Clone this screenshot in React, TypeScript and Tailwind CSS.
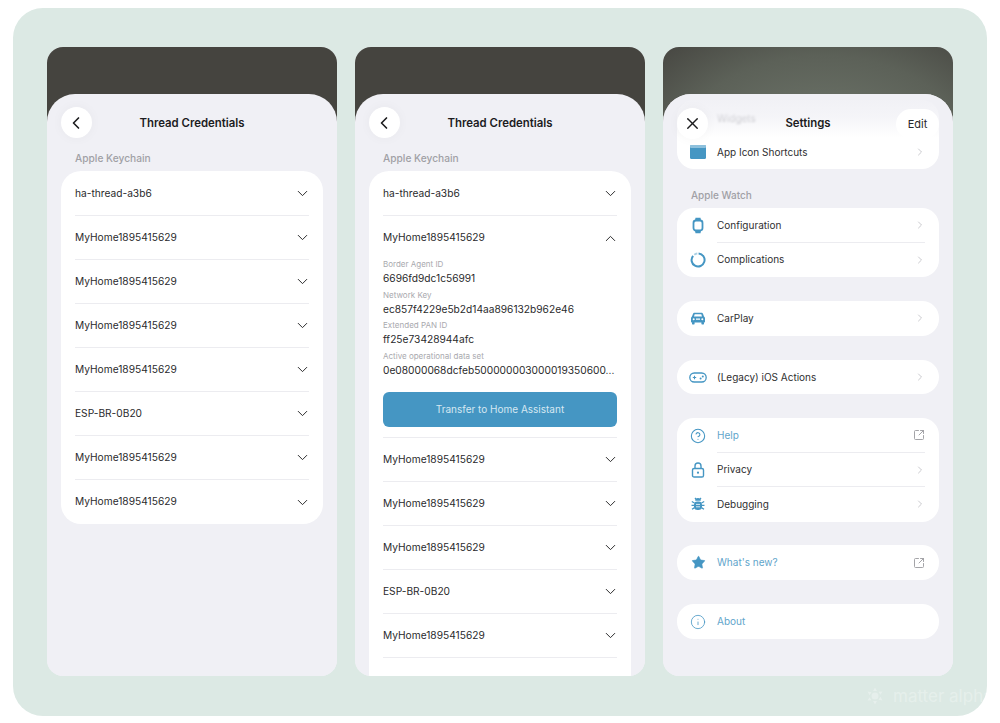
import { ReactNode } from 'react';
import { ChevronDown, ChevronLeft, ChevronRight, ChevronUp, CircleHelp, Info, Star, SquareArrowOutUpRight, X } from 'lucide-react';

const names = ['ha-thread-a3b6', 'MyHome1895415629', 'MyHome1895415629', 'MyHome1895415629', 'MyHome1895415629', 'ESP-BR-0B20', 'MyHome1895415629', 'MyHome1895415629'];

function Phone({ children, dim = false }: { children: ReactNode; dim?: boolean }) {
  return (
    <div className="relative w-[290px] h-[629px] rounded-[16px] overflow-hidden pt-[47px] bg-[#f0f0f5]">
      <div className={`absolute left-0 right-0 top-0 h-[120px] ${dim ? 'bg-[radial-gradient(ellipse_at_55%_90%,#727a6f,#5c6158_65%,#474742)]' : 'bg-[#45443f]'}`} />
      <div className="relative h-[582px] rounded-t-[28px] bg-[#f0f0f5] overflow-hidden">{children}</div>
    </div>
  );
}

function RoundButton({ children }: { children: ReactNode }) {
  return (
    <div className="w-[31px] h-[31px] shrink-0 rounded-full bg-white flex items-center justify-center text-[#1c1c1e] shadow-[0_0_12px_rgba(0,0,0,0.04)]">
      {children}
    </div>
  );
}

function ThreadHeader() {
  return (
    <>
      <div className="flex items-center px-[14px] pt-[13px] h-[44px]">
        <RoundButton>
          <ChevronLeft size={20} strokeWidth={2} className="-ml-[1px]" />
        </RoundButton>
        <div className="flex-1 pr-[31px] pt-[2px] text-center text-[11.4px] font-semibold text-[#1c1c1e]">Thread Credentials</div>
      </div>
      <div className="px-[28px] mt-[14px] h-[19px] text-[10.2px] leading-[13px] font-medium text-[#a0a0a5]">Apple Keychain</div>
    </>
  );
}

function CredRow({ name, open = false, line = true }: { name: string; open?: boolean; line?: boolean }) {
  return (
    <div className={`h-[44px] flex items-center justify-between ${line && !open ? 'border-b border-[#ececf0]' : ''}`}>
      <span className="text-[10.2px] text-[#2a2a2c]">{name}</span>
      {open ? <ChevronUp size={17} strokeWidth={1.4} className="text-[#2a2a2c] -mr-[2px]" /> : <ChevronDown size={17} strokeWidth={1.4} className="text-[#2a2a2c] -mr-[2px]" />}
    </div>
  );
}

function Field({ label, value }: { label: string; value: string }) {
  return (
    <div className="h-[30.6px]">
      <div className="text-[8px] leading-[12px] text-[#a9a9ae]">{label}</div>
      <div className="text-[10.2px] leading-[17px] text-[#2a2a2c] whitespace-nowrap">{value}</div>
    </div>
  );
}

function SettingRow({ icon, label, link = false, external = false, line = false, noArrow = false }: { icon: ReactNode; label: string; link?: boolean; external?: boolean; line?: boolean; noArrow?: boolean }) {
  return (
    <div className="h-[34.4px] flex items-center pl-[13px] pr-[14px]">
      <div className="w-[16px] h-[16px] flex items-center justify-center text-[#4596c3] shrink-0">{icon}</div>
      <div className={`ml-[11px] flex-1 h-full flex items-center justify-between ${line ? 'border-b border-[#ececf0]' : ''}`}>
        <span className={`text-[10px] ${link ? 'text-[#5fa5cb]' : 'text-[#2f2f31]'}`}>{label}</span>
        {noArrow ? null : external ? (
          <SquareArrowOutUpRight size={12} strokeWidth={1.8} className="text-[#9a9a9e]" />
        ) : (
          <ChevronRight size={12} strokeWidth={1.6} className="text-[#bdbdc2] -mr-[1px]" />
        )}
      </div>
    </div>
  );
}

function Group({ children, className = '' }: { children: ReactNode; className?: string }) {
  return <div className={`mx-[14px] bg-white rounded-[17px] overflow-hidden ${className}`}>{children}</div>;
}

function WatchIcon() {
  return (
    <svg width="12" height="17" viewBox="0 0 12 17" fill="none">
      <rect x="1.5" y="3.5" width="9" height="10" rx="2.4" stroke="currentColor" strokeWidth="1.8" />
      <path d="M3 3.2 3.500 .8h5L9 3.200zM3 13.800l.5 2.400h5l.5-2.400z" fill="currentColor" />
    </svg>
  );
}

function RingIcon() {
  return (
    <svg width="16" height="16" viewBox="0 0 16 16" fill="none">
      <path d="M8.600 1.500a6.500 6.500 0 1 1-5.500 2.300" stroke="currentColor" strokeWidth="2" />
      <path d="M4.300 2.700a6.500 6.500 0 0 1 3-1.200" stroke="currentColor" strokeWidth="2" opacity="0.45" />
    </svg>
  );
}

function CarIcon() {
  return (
    <svg width="14" height="13" viewBox="0 0 14 13" fill="currentColor">
      <path fillRule="evenodd" d="M3.600.8h6.800c.8 0 1.400.5 1.700 1.200l.9 2.600c.6.4 1 1 1 1.700v3.400c0 .4-.3.7-.7.7H.7C.3 10.400 0 10.100 0 9.700V6.300c0-.7.4-1.300 1-1.700L1.900 2C2.200 1.300 2.800.8 3.600.8zM3.700 2.200 3 4.400h8l-.700-2.200zM2.700 6.200a1 1 0 1 0 0 2 1 1 0 0 0 0-2zm8.600 0a1 1 0 1 0 0 2 1 1 0 0 0 0-2zM5 6.500v1.200h4V6.500z" />
      <rect x="1" y="10" width="2.600" height="2.400" rx=".6" />
      <rect x="10.400" y="10" width="2.600" height="2.400" rx=".6" />
    </svg>
  );
}

function GamepadIcon() {
  return (
    <svg width="18" height="11" viewBox="0 0 18 11" fill="none" className="shrink-0">
      <rect x="0.8" y="1" width="16.400" height="9" rx="4.500" stroke="currentColor" strokeWidth="1.300" />
      <path d="M3.800 5.500h3.400M5.500 3.800v3.400" stroke="currentColor" strokeWidth="1.100" />
      <circle cx="11.600" cy="6.400" r="1" fill="currentColor" />
      <circle cx="13.800" cy="4.600" r="1" fill="currentColor" />
    </svg>
  );
}

function BugIcon() {
  return (
    <svg width="14" height="14" viewBox="0 0 14 14" fill="currentColor">
      <path d="M4.200 3.800a2.800 2.800 0 0 1 5.600 0z" />
      <rect x="3" y="4.400" width="8" height="8.600" rx="3.400" />
      <path d="M4 1 5.200 2.400M10 1 8.800 2.400M0.800 4.500 3.500 6M13.200 4.500 10.500 6M0.500 8.400h3M13.500 8.400h-3M1 12.200 3.600 10.600M13 12.200 10.400 10.600" stroke="currentColor" strokeWidth="1.300" />
      <path d="M5 7.400h4M5 9.800h4" stroke="#ffffff" strokeWidth=".8" />
    </svg>
  );
}

function LockIcon() {
  return (
    <svg width="14" height="16" viewBox="0 0 14 16" fill="none">
      <path d="M4 6.500V4a3 3 0 0 1 6 0v2.500" stroke="currentColor" strokeWidth="1.400" />
      <rect x="1.500" y="6.500" width="11" height="8.500" rx="1.600" stroke="currentColor" strokeWidth="1.400" />
      <circle cx="7" cy="10.700" r="1.100" fill="currentColor" />
    </svg>
  );
}

function Watermark() {
  return (
    <div className="absolute left-[852px] top-[678px] w-[122px] overflow-hidden flex items-center gap-[8px] text-white/30 whitespace-nowrap">
      <svg width="20" height="20" viewBox="0 0 20 20" fill="currentColor" className="shrink-0">
        <circle cx="10" cy="10" r="3.500" />
        <path d="M10 1.500 12 5H8zM10 18.500 8 15h4zM2.500 5.500l4 .8-2 3zM17.500 14.500l-4-.8 2-3zM2.500 14.500l2-3.300 2 3zM17.500 5.500l-2 3.300-2-3z" />
      </svg>
      <span className="text-[17px] leading-[20px]">matter alpha</span>
    </div>
  );
}

export default function App() {
  return (
    <div className="w-[1000px] h-[723px] bg-white pt-[8px] pl-[13px] overflow-hidden [font-family:Inter,'Liberation_Sans',sans-serif]">
      <div className="relative w-[974px] h-[708px] rounded-[30px] overflow-hidden bg-[#dce9e4] pt-[39px] pl-[34px] flex gap-[18px]">
        <Phone>
          <ThreadHeader />
          <div className="mx-[14px] bg-white rounded-[20px] px-[14px] pt-[1px]">
            {names.map((name, i) => (
              <CredRow key={i} name={name} line={i < names.length - 1} />
            ))}
          </div>
        </Phone>

        <Phone>
          <ThreadHeader />
          <div className="mx-[14px] bg-white rounded-t-[20px] px-[14px] pt-[1px] h-[520px] overflow-hidden">
            <CredRow name="ha-thread-a3b6" />
            <CredRow name="MyHome1895415629" open />
            <div className="mt-[-2px]">
              <Field label="Border Agent ID" value="6696fd9dc1c56991" />
              <Field label="Network Key" value="ec857f4229e5b2d14aa896132b962e46" />
              <Field label="Extended PAN ID" value="ff25e73428944afc" />
              <Field label="Active operational data set" value="0e08000068dcfeb500000003000019350600..." />
            </div>
            <div className="mt-[12px] h-[34.500px] rounded-[6px] bg-[#4596c3] flex items-center justify-center text-[10px] text-[#d5e8f2]">
              Transfer to Home Assistant
            </div>
            <div className="mt-[10.500px] border-t border-[#ececf0]" />
            <CredRow name="MyHome1895415629" />
            <CredRow name="MyHome1895415629" />
            <CredRow name="MyHome1895415629" />
            <CredRow name="ESP-BR-0B20" />
            <CredRow name="MyHome1895415629" />
          </div>
        </Phone>

        <Phone dim>
          <div className="pt-[6px]">
            <Group>
              <div className="h-[35px] pl-[40px] pt-[11px] text-[10px] text-[#9b9ba0] blur-[1px]">Widgets</div>
              <SettingRow
                label="App Icon Shortcuts"
                icon={
                  <svg width="16" height="14" viewBox="0 0 16 14">
                    <rect width="16" height="14" rx="1.500" fill="#4596c3" />
                    <rect width="16" height="3" rx="1" fill="#8dc0dc" />
                  </svg>
                }
              />
            </Group>
            <div className="px-[28px] mt-[20px] h-[19px] text-[10px] leading-[13px] font-medium text-[#a0a0a5]">Apple Watch</div>
            <Group>
              <SettingRow icon={<WatchIcon />} label="Configuration" line />
              <SettingRow icon={<RingIcon />} label="Complications" />
            </Group>
            <Group className="mt-[24px]">
              <SettingRow icon={<CarIcon />} label="CarPlay" />
            </Group>
            <Group className="mt-[24.500px]">
              <SettingRow icon={<GamepadIcon />} label="(Legacy) iOS Actions" />
            </Group>
            <Group className="mt-[24px]">
              <SettingRow icon={<CircleHelp size={16} strokeWidth={1.600} />} label="Help" link external line />
              <SettingRow icon={<LockIcon />} label="Privacy" line />
              <SettingRow icon={<BugIcon />} label="Debugging" />
            </Group>
            <Group className="mt-[23.500px] pt-[0.500px]">
              <SettingRow icon={<Star size={15} fill="currentColor" strokeWidth={1} />} label="What's new?" link external />
            </Group>
            <Group className="mt-[24px] pt-[0.500px]">
              <SettingRow icon={<Info size={16} strokeWidth={1.200} />} label="About" link noArrow />
            </Group>
          </div>

          {/* faded bar over the scrolled list */}
          <div className="absolute left-0 right-0 top-0 h-[44px] bg-gradient-to-b from-[#f0f0f5] via-[#f0f0f5]/70 to-transparent" />
          <div className="absolute left-[14px] right-[14px] top-[14px] flex items-center">
            <RoundButton>
              <X size={19} strokeWidth={1.700} />
            </RoundButton>
            <span className="flex-1 text-center pl-[12px] pt-[1px] text-[11.400px] font-semibold text-[#1c1c1e]">Settings</span>
            <div className="h-[30px] w-[43px] pt-[1px] rounded-full bg-white flex items-center justify-center text-[11px] text-[#2a2a2c]">Edit</div>
          </div>
        </Phone>
        <Watermark />
      </div>
    </div>
  );
}
